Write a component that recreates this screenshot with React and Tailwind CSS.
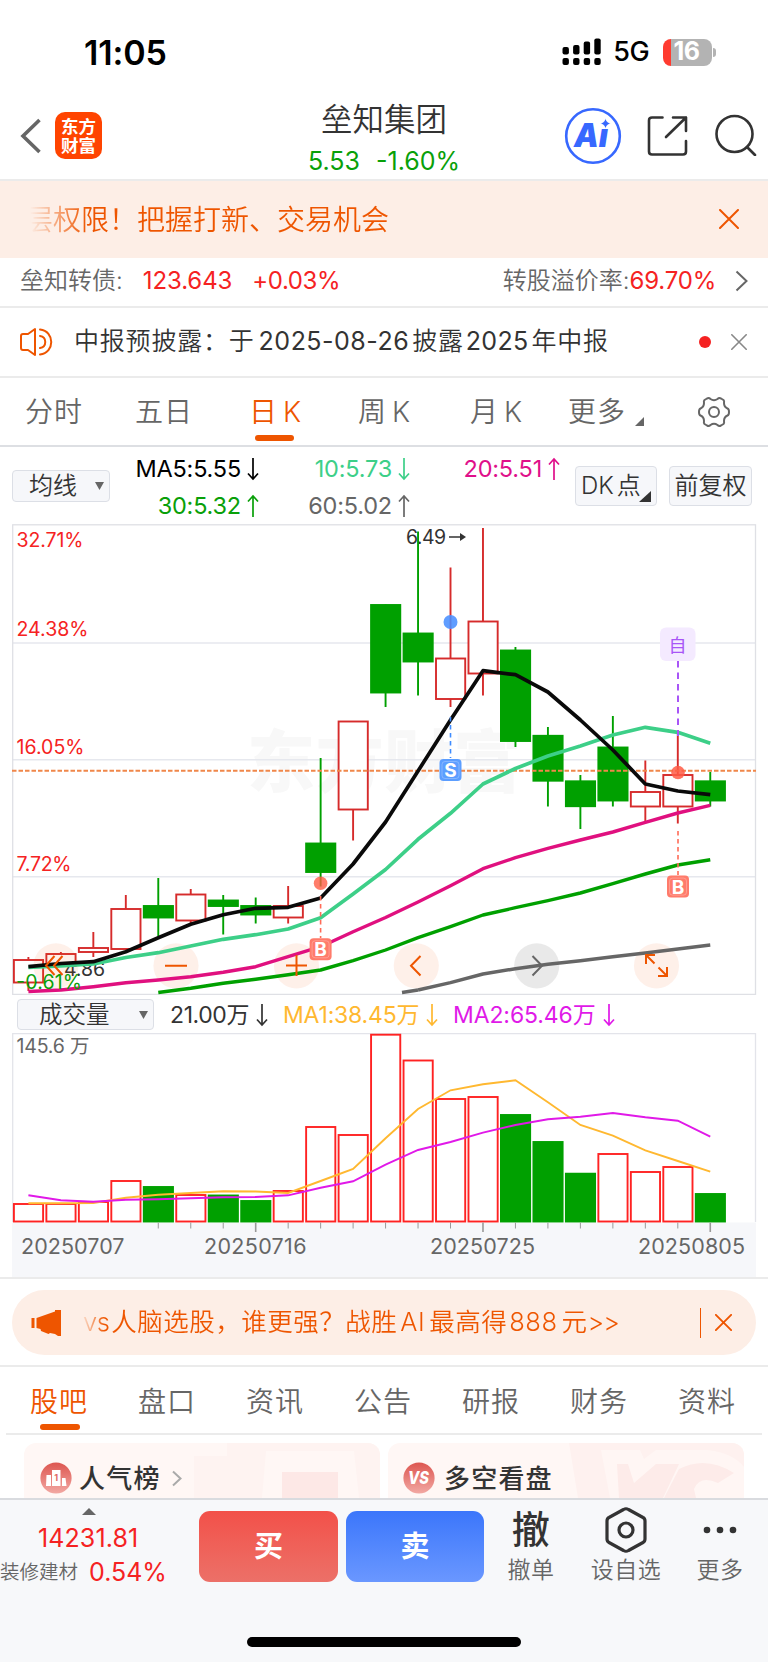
import React from 'react';

// one entry per trading day: [up, open/close top, open/close bottom, high, low, volume top]
const days = [
    [1, 960, 982.5, 957, 991, 1204],
    [1, 954, 966, 952, 966, 1204],
    [1, 948, 952, 932, 957, 1202],
    [1, 909, 949, 895, 949, 1181],
    [0, 906, 917.5, 878, 936, 1187],
    [1, 894.5, 920.5, 889, 924, 1195],
    [0, 900.5, 906, 895, 934.5, 1195.5],
    [0, 906, 914.5, 897.5, 923.5, 1201],
    [1, 906, 917.5, 886, 923.5, 1191],
    [0, 843.5, 872, 758, 886.5, 1127],
    [1, 721.5, 809.5, 721, 840.5, 1135],
    [0, 605, 692.5, 604.5, 707, 1034.7],
    [0, 633.5, 661.5, 531.5, 695.5, 1060.5],
    [1, 658.5, 699, 567.5, 707, 1099],
    [1, 621.5, 673.5, 528, 695.5, 1097],
    [0, 650.5, 741, 647, 747, 1115],
    [0, 735.8, 780.7, 727, 806.5, 1142],
    [0, 781.3, 806.2, 775, 829, 1173.7],
    [0, 747.5, 800.5, 716, 806.5, 1154],
    [1, 792, 806.5, 760.5, 821, 1172],
    [1, 775, 806.5, 733, 823.5, 1167],
    [0, 781.3, 800.5, 772, 806.5, 1194],
];
const volumeDown = [4, 6, 7, 15, 16, 17, 21];

const ma5 = [966.7, 963.5, 961.7, 951.7, 937.7, 924.3, 914.7, 908.3, 907.3, 898, 864, 822, 771, 720, 670.7, 674.7, 692, 720, 750, 784, 791, 794.7];
const ma10 = [967.5, 966, 964, 957.5, 952.7, 946, 939.3, 934.7, 929, 917.7, 894, 869.5, 839.3, 813.3, 784, 768.5, 756, 746, 735, 727.3, 732.3, 743.3];
const ma20 = [991.5, 990, 986.7, 982.7, 980, 976.7, 972.3, 966.7, 956.7, 946.7, 931.7, 917.5, 902, 885.7, 868.7, 857.7, 848.3, 840, 832, 822.3, 813, 805.3];
const ma30 = [992.5, 988.3, 983.3, 979.3, 974.7, 970, 960.7, 950, 937.7, 926.7, 915, 907.7, 900.7, 893, 883.7, 874, 865, 859.7];
const ma60 = [990, 982.7, 974, 968.7, 964.3, 960.7, 956.7, 953, 949, 945];
const vol1 = [1203.3, 1203.3, 1203, 1197.7, 1194.7, 1193, 1191.3, 1191.5, 1193, 1181, 1169, 1138.3, 1109, 1090.3, 1084.3, 1080.3, 1102.3, 1125, 1135.7, 1150.3, 1161, 1171.7];
const vol2 = [1195.3, 1200.3, 1201.7, 1199.7, 1199.3, 1198.3, 1197.3, 1197, 1195.3, 1187.7, 1181.3, 1164.7, 1150, 1142, 1132.7, 1125, 1119.3, 1116.7, 1113, 1117.3, 1120.7, 1136.7];

const xAt = (i) => 28.4 + i * 32.47;
const toPoints = (values, start = 0) => values.map((y, i) => `${xAt(i + start)},${y}`).join(' ');

const Cross = ({ size, className, width = 2 }) => (
    <svg width={size} height={size} viewBox="0 0 20 20" className={className} fill="none" stroke="currentColor" strokeWidth={width} strokeLinecap="round">
        <path d="M1 1L19 19M19 1L1 19" />
    </svg>
);

const Arrow = ({ up }) => (
    <svg width="12" height="24" viewBox="0 0 12 24" className="shrink-0" fill="none" stroke="currentColor" strokeWidth="1.7">
        {up ? <path d="M6 23V2M1 7.5L6 2L11 7.5" /> : <path d="M6 1V22M1 16.5L6 22L11 16.5" />}
    </svg>
);

const Badge = ({ x, y, color, children }) => (
    <g>
        <rect x={x - 11} y={y - 11} width="22" height="22" rx="4" fill={color} />
        <rect x={x - 8.5} y={y - 8.5} width="17" height="17" rx="3" fill="none" stroke="#fff" strokeOpacity=".25" />
        <text x={x} y={y + 7} textAnchor="middle" fontSize="19" fontWeight="700" fill="#fff">{children}</text>
    </g>
);

function StatusBar() {
    return (
        <div className="h-[95px] pt-[9px] pl-[84px] pr-[52px] flex items-center justify-between text-black">
            <span className="text-[34px] font-semibold tracking-[-0.1px]">11:05</span>
            <div className="flex items-center">
                <svg width="39" height="28" viewBox="0 0 39 28">
                    {[9, 7, 3.5, 0.5].map((y, i) => (
                        <g key={i}>
                            <rect x={0.5 + i * 10.6} y={y} width="6.4" height={16.5 - y} rx="2" />
                            <rect x={0.5 + i * 10.6} y="20" width="6.4" height="7" rx="2" />
                        </g>
                    ))}
                </svg>
                <span className="ml-[12px] text-[27px] font-medium tracking-[-0.6px]">5G</span>
                <div className="ml-[14px] w-[49px] h-[27px] rounded-[8px] bg-[linear-gradient(90deg,#ff3b30_8px,#b3b3b3_8px)] text-white text-[25px] font-bold flex items-center justify-center">
                    <span className="-ml-[2px] tracking-[-0.5px]">16</span>
                </div>
                <div className="ml-[1px] w-[3px] h-[9px] rounded-r-full bg-[#b3b3b3]" />
            </div>
        </div>
    );
}

function NavBar() {
    return (
        <div className="h-[86px] border-b-2 border-[#ebebeb] flex justify-between pl-[20px] pr-[11px]">
            <div className="flex w-[271px] pt-[17px]">
                <svg width="22" height="36" viewBox="0 0 22 36" className="mt-[6px]" fill="none" stroke="#666" strokeWidth="3.6">
                    <path d="M19.5 2L3 18L19.5 34" />
                </svg>
                <div className="ml-[13px] size-[47px] rounded-[10px] bg-[#ff4400] text-white text-[17.5px] leading-[19px] font-bold flex flex-col items-center justify-center">
                    <span>东方</span>
                    <span>财富</span>
                </div>
            </div>
            <div className="flex flex-col items-center whitespace-nowrap">
                <span className="text-[31.500px] leading-[50px] text-[#333] font-[350]">垒知集团</span>
                <span className="text-[25px] leading-[32px] text-[#09a009]">5.53<span className="ml-[16px]">-1.60%</span></span>
            </div>
            <div className="flex w-[280px] justify-end pt-[12px]">
                <svg width="58" height="58" viewBox="0 0 58 58" fill="#3768ff">
                    <circle cx="29" cy="29" r="26.8" fill="none" stroke="#3768ff" strokeWidth="2.6" />
                    <text x="10" y="39.5" fontSize="32.500" fontWeight="900" fontStyle="italic" textLength="34" lengthAdjust="spacingAndGlyphs">Aı</text>
                    <path d="M41.500 11.500Q42.500 15.500 46.500 16.500Q42.500 17.500 41.500 21.500Q40.500 17.500 36.500 16.500Q40.500 15.500 41.500 11.500Z" stroke="#fff" strokeWidth=".6" />
                </svg>
                <svg width="42" height="42" viewBox="0 0 42 42" className="ml-[25px] mt-[8px]" fill="none" stroke="#333" strokeWidth="2.6" strokeLinecap="round" strokeLinejoin="round">
                    <path d="M15.500 2.500H5Q2 2.500 2 5.500V36.500Q2 39.500 5 39.500H36Q39 39.500 39 36.500V26M26 2.500H39V16M39 2.500L19 22" />
                </svg>
                <svg width="43" height="42" viewBox="0 0 43 42" className="ml-[25px] mt-[7px]" fill="none" stroke="#333" strokeWidth="2.6" strokeLinecap="round">
                    <circle cx="20.500" cy="20" r="18" />
                    <path d="M33 33L41 41" />
                </svg>
            </div>
        </div>
    );
}

function Notices() {
    return (
        <>
            <div className="h-[77px] bg-[#fdeee6] text-[#ee5500] flex items-center justify-between pl-[25px] pr-[29px]">
                <span className="text-[28px] font-[350] bg-[linear-gradient(90deg,#ee550000_5px,#ee5500_62px)] bg-clip-text text-transparent">层权限！把握打新、交易机会</span>
                <Cross size={20} className="-mt-[2px]" />
            </div>
            <div className="h-[50px] border-b-2 border-[#ebebeb] pb-[3px] pl-[20px] pr-[20px] flex items-center text-[24px] text-[#666] whitespace-nowrap">
                <span className="font-[350]">垒知转债:</span>
                <span className="ml-[20px] text-[#f52222] tracking-[-0.1px]">123.643</span>
                <span className="ml-[20px] text-[#f52222] tracking-[-0.4px]">+0.03%</span>
                <span className="ml-auto font-[350]">转股溢价率:</span>
                <span className="text-[#f52222] tracking-[-0.2px]">69.70%</span>
                <svg width="13" height="22" viewBox="0 0 13 22" className="ml-[19px]" fill="none" stroke="#666" strokeWidth="2">
                    <path d="M1.500 1.500L11.500 11L1.500 20.500" />
                </svg>
            </div>
            <div className="h-[70px] border-b-2 border-[#ebebeb] pl-[19px] pr-[21px] flex items-center">
                <svg width="34" height="30" viewBox="0 0 34 30" fill="none" stroke="#ee5500" strokeWidth="2" strokeLinecap="round" strokeLinejoin="round">
                    <path d="M16 2V28L9 23H4Q2 23 2 21V9Q2 7 4 7H9ZM21 2.500C36 4 36 26 21 27.500M21 9C28 10 28 20 21 21" />
                </svg>
                <span className="ml-[21px] text-[25px] tracking-[0.8px] text-[#333] font-[350] whitespace-nowrap">中报预披露：于<span className="ml-[4px] mr-[3px] tracking-[0.5px] font-normal">2025-08-26</span>披露<span className="ml-[2px] mr-[3px] tracking-[0.3px] font-normal">2025</span>年中报</span>
                <div className="ml-auto size-[12px] rounded-full bg-[#f52222]" />
                <Cross size={16} className="ml-[20px] text-[#888]" />
            </div>
        </>
    );
}

function PeriodTabs() {
    return (
        <div className="h-[69px] border-b-2 border-[#dddfe3] flex items-center pl-[25px] text-[28px] text-[#666] font-[350] whitespace-nowrap tracking-[1px]">
            <span className="w-[110px]">分时</span>
            <span className="w-[114px]">五日</span>
            <div className="w-[109px] h-full flex items-center relative text-[#ee5500]">
                日<span className="ml-[5px]">K</span>
                <div className="absolute left-[6px] bottom-[4px] w-[39px] h-[6px] rounded-full bg-[#ee5500]" />
            </div>
            <span className="w-[112px]">周<span className="ml-[5px]">K</span></span>
            <span className="w-[98px]">月<span className="ml-[5px]">K</span></span>
            <span>更多</span>
            <svg width="9" height="9" viewBox="0 0 9 9" className="ml-[9px] mt-[20px]"><path d="M9 0V9H0Z" fill="#666" /></svg>
            <svg width="34" height="32" viewBox="-17 -16 34 32" className="ml-[53px]" fill="none" stroke="#666" strokeWidth="2" strokeLinejoin="round">
                <path d="M-7 -13.500Q-5 -14.500 -3.500 -13Q0 -10.500 3.500 -13Q5 -14.500 7 -13.500L9.500 -12Q10.500 -11 10 -9Q10 -5 13.500 -3.500Q15 -3 15 0Q15 3 13.500 3.500Q10 5 10 9Q10.500 11 9.500 12L7 13.500Q5 14.500 3.500 13Q0 10.500 -3.500 13Q-5 14.500 -7 13.500L-9.500 12Q-10.500 11 -10 9Q-10 5 -13.500 3.500Q-15 3 -15 0Q-15 -3 -13.500 -3.500Q-10 -5 -10 -9Q-10.500 -11 -9.500 -12Z" />
                <circle r="5" />
            </svg>
        </div>
    );
}

const averages = [
    { label: 'MA5:5.55', color: 'text-black', up: false },
    { label: '10:5.73', color: 'text-[#3dcf88]', up: false },
    { label: '20:5.51', color: 'text-[#e0108a]', up: true },
    { label: '30:5.32', color: 'text-[#09a009]', up: true },
    { label: '60:5.02', color: 'text-[#666]', up: true },
];

function AverageBar() {
    return (
        <div className="h-[77px] flex items-start pl-[12px] text-[24px] text-[#333]">
            <div className="mt-[23px] w-[98px] h-[32px] rounded-[4px] border border-[#dcdfe6] bg-[#f6f7fa] flex items-center justify-between pl-[16px] pr-[5px] font-[350]">
                均线
                <svg width="9" height="8" viewBox="0 0 9 8"><path d="M0 0H9L4.500 8Z" fill="#666" /></svg>
            </div>
            <div className="grid grid-cols-[149px_151px_150px] pt-[3px]">
                {averages.map((item) => (
                    <div key={item.label} className={`h-[37px] flex items-center justify-end gap-[6px] text-[23.500px] tracking-[-0.2px] ${item.color}`}>
                        {item.label}
                        <Arrow up={item.up} />
                    </div>
                ))}
            </div>
            <div className="relative mt-[19px] ml-[15px] w-[82px] h-[40px] rounded-[4px] border border-[#dcdfe6] bg-[#f6f7fa] pl-[5px] leading-[38px] font-[350]">
                DK<span className="ml-[3px]">点</span>
                <svg width="12" height="11" viewBox="0 0 12 11" className="absolute right-[5px] bottom-[3px]"><path d="M12 0V11H0Z" fill="#333" /></svg>
            </div>
            <div className="mt-[19px] ml-[12px] w-[83px] h-[40px] rounded-[4px] border border-[#dcdfe6] bg-[#f6f7fa] text-center leading-[38px] font-[350]">前复权</div>
        </div>
    );
}

function PriceChart() {
    return (
        <svg width="745" height="471" viewBox="12 524 745 471" className="ml-[12px] block" fontSize="19.500">
            <text x="247" y="787" fontSize="68" fontWeight="900" fill="#f8f8f8" textLength="274">东方财富</text>
            <g stroke="#e6e8ee" strokeWidth="1.6">
                <path d="M12 643H756M12 759.700H756M12 876.700H756" />
                <rect x="12.700" y="524.800" width="742.800" height="469.600" fill="none" stroke="#dfe0e5" strokeWidth="1.300" />
            </g>
            <g fill="#f52222">
                <text x="16.500" y="546.500" textLength="67">32.71%</text>
                <text x="16.500" y="636" textLength="72">24.38%</text>
                <text x="16.500" y="753.500" textLength="68">16.05%</text>
                <text x="16.500" y="870.500" textLength="55">7.72%</text>
            </g>
            <g fill="#333">
                <text x="406" y="544" textLength="40">6.49</text>
                <path d="M449 536.200H460V533L466 537L460 541V537.800H449Z" />
                <text x="64" y="976" textLength="41">4.86</text>
            </g>

            {days.map(([up, top, bottom, high, low], i) => {
                const x = xAt(i);
                const color = up ? '#d62b2b' : '#00a000';
                return (
                    <g key={i} stroke={color} strokeWidth="1.900">
                        <path d={`M${x} ${high}V${top}M${x} ${bottom}V${low}`} />
                        <rect x={x - 14.500} y={top} width="29.200" height={bottom - top} fill={up ? '#fff' : color} />
                    </g>
                );
            })}
            <path d="M12 770.700H756" stroke="#f0874a" strokeWidth="2" strokeDasharray="4.500 2" />

            {/* floating chart controls */}
            <g fill="#ee5500" fillOpacity=".085">
                {[56, 176, 296.5, 416.3, 656.5].map((x) => <circle key={x} cx={x} cy="965.800" r="22.600" />)}
                <circle cx="536.700" cy="965.800" r="22.600" fill="#000" />
            </g>

            <g fill="none" strokeWidth="3.400" strokeLinejoin="round">
                <path d="M402 992.500L418 990" stroke="#666" />
                <polyline points={toPoints(ma60, 12)} stroke="#666" />
                <polyline points={toPoints(ma30, 4)} stroke="#00a000" />
                <polyline points={toPoints(ma20)} stroke="#e0107f" />
                <polyline points={toPoints(ma10)} stroke="#3dcf88" strokeWidth="3.700" />
                <polyline points={toPoints(ma5)} stroke="#0a0a0a" strokeWidth="3.700" />
            </g>

            {/* trade markers */}
            <g fill="none" strokeWidth="1.600" strokeDasharray="4.500 3.500">
                <path d="M320.600 896V938M678 831V875" stroke="#ff6b57" />
                <path d="M450.500 717V758" stroke="#3f8cff" />
                <path d="M678 661V736" stroke="#a855f7" strokeDasharray="6.500 5" strokeWidth="2" />
            </g>
            <circle cx="320.600" cy="883.300" r="6.800" fill="#ff5c45" fillOpacity=".8" />
            <circle cx="678" cy="772.500" r="6.800" fill="#ff5c45" fillOpacity=".85" />
            <circle cx="450.500" cy="622" r="7" fill="#4a90ff" fillOpacity=".88" />
            <Badge x={320.6} y={949.3} color="#ff7b6b">B</Badge>
            <Badge x={678} y={886.6} color="#ff7b6b">B</Badge>
            <Badge x={450.5} y={770} color="#5c9eff">S</Badge>
            <rect x="660" y="627.500" width="35.500" height="33.500" rx="6" fill="#f4eaff" />
            <text x="677.500" y="651.500" fontSize="18" fill="#a855f7" textAnchor="middle">自</text>

            <text x="16" y="988.500" fill="#09a009" textLength="66">-0.61%</text>
            <g fill="none" stroke="#ee5500" strokeWidth="2">
                <path d="M54.500 956L46 965.500L54.500 975M62.500 956L54 965.500L62.500 975" />
                <path d="M165 965.800H187M286 965.500H307M296.500 955V976M420.500 956L411 965.800L420.500 975.500" />
                <path d="M646 964V955H655M646 955L654.500 963.500M667 967V976H658M667 976L658.500 967.500" />
                <path d="M532.500 956L542 965.800L532.500 975.500" stroke="#666" />
            </g>
        </svg>
    );
}

function VolumeBar() {
    return (
        <div className="h-[38px] pt-[4px] pl-[17px] flex items-start text-[23px] leading-[32px] whitespace-nowrap text-[#333]">
            <div className="w-[137px] h-[31px] rounded-[4px] border border-[#dcdfe6] bg-[#f6f7fa] flex items-center justify-between pl-[21px] pr-[5px] text-[23.500px] font-[350]">
                成交量
                <svg width="9" height="8" viewBox="0 0 9 8"><path d="M0 0H9L4.500 8Z" fill="#666" /></svg>
            </div>
            <div className="ml-[16px] w-[113px] flex items-center gap-[7px] tracking-[-0.4px]">21.00万<Arrow /></div>
            <div className="w-[170px] flex items-center gap-[7px] tracking-[-0.2px] text-[#ffb830]">MA1:38.45万<Arrow /></div>
            <div className="flex items-center gap-[7px] tracking-[-0.1px] text-[#e019e8]">MA2:65.46万<Arrow /></div>
        </div>
    );
}

function VolumeChart() {
    return (
        <svg width="745" height="244" viewBox="12 1033 745 244" className="ml-[12px] block">
            <rect x="12" y="1222.500" width="744" height="56" fill="#f6f7fa" />
            <path d="M12.700 1222V1033.600H755.500V1222" fill="none" stroke="#e3e4ea" strokeWidth="1.300" />
            <text x="16.500" y="1053" fontSize="19.500" fill="#666" textLength="73">145.6 万</text>
            {days.map((day, i) => {
                const down = volumeDown.includes(i);
                const color = down ? '#00a000' : '#ff2222';
                return (
                    <rect key={i} x={xAt(i) - 14.500} y={day[5]} width="29.200" height={1221.5 - day[5]} fill={down ? color : '#fff'} stroke={color} strokeWidth="1.900" />
                );
            })}
            {days.map((_, i) => i > 3 && (
                <path key={i} d={`M${xAt(i)} 1222.500V${i % 7 === 0 ? 1232 : 1228.5}`} stroke="#999" strokeWidth={i % 7 === 0 ? 1.6 : 1} />
            ))}
            <g fill="none" strokeWidth="1.900">
                <polyline points={toPoints(vol1)} stroke="#ffb830" />
                <polyline points={toPoints(vol2)} stroke="#e019e8" />
            </g>
            <g fill="#666" fontSize="21.500">
                <text x="21" y="1253.500" textLength="103.500">20250707</text>
                <text x="204" y="1253.500" textLength="102.500">20250716</text>
                <text x="430" y="1253.500" textLength="105">20250725</text>
                <text x="638" y="1253.500" textLength="107">20250805</text>
            </g>
        </svg>
    );
}

function Promo() {
    return (
        <div className="h-[90px] border-y-2 border-[#ebebeb] pt-[11px] px-[12px]">
            <div className="h-[65px] rounded-full bg-[#fdeee6] text-[#ee5500] flex items-center pl-[19px] pr-[24px]">
                <svg width="31" height="28" viewBox="0 0 31 28" fill="#ee5500">
                    <path d="M0.500 9H3.500V19H0.500ZM5.500 9L24 2.500V1H30V27H27L24 25L19 24L17.500 25L10 22L9.500 20L5.500 19Z" />
                </svg>
                <span className="ml-[21px] text-[25.500px] tracking-[0.5px] font-[350] whitespace-nowrap bg-[linear-gradient(90deg,#ee550033_2px,#ee5500_22px)] bg-clip-text text-transparent"><span className="tracking-[-0.5px]">vs</span><span className="ml-[2px]">人脑选股，谁更强？战胜</span><span className="ml-[3px] mr-[4px]">AI</span>最高得<span className="ml-[2px] mr-[4px]">888</span>元<span className="tracking-[-1px]">&gt;&gt;</span></span>
                <div className="ml-auto w-[1.500px] h-[30px] bg-[#ee5500]" />
                <Cross size={17} className="ml-[14px]" width={2.2} />
            </div>
        </div>
    );
}

function SectionTabs() {
    const tabs = ['股吧', '盘口', '资讯', '公告', '研报', '财务', '资料'];
    return (
        <div className="mx-[6px] h-[68px] border-b-2 border-[#ebebeb] flex items-center text-[28px] tracking-[1px] text-[#666] font-[350]">
            {tabs.map((tab, i) => (
                <div key={tab} className={`relative w-[108px] pl-[24px] h-full leading-[70px] ${i === 0 ? 'text-[#ee5500]' : ''}`}>
                    {tab}
                    {i === 0 && <div className="absolute left-[34px] bottom-[3px] w-[40px] h-[6px] rounded-full bg-[#ee5500]" />}
                </div>
            ))}
        </div>
    );
}

function Cards() {
    return (
        <div className="h-[63px] pt-[8px] px-[24px] flex gap-[8px] text-[26px] font-medium text-[#333]">
            <div className="relative w-[356px] h-[55px] rounded-t-[12px] overflow-hidden bg-[#fff7f5]">
                <svg width="356" height="55" className="absolute inset-0">
                    <path d="M170 13H203V0H356V55H170Z" fill="#fef3f1" />
                    <path d="M242 8H330L335 55H238Z" fill="#fff7f5" />
                    <rect x="258" y="29" width="56" height="26" fill="#fde8e6" />
                </svg>
                <div className="relative flex items-center h-[50px] mt-[11px] pl-[16px] -translate-y-[1px]">
                    <svg width="32" height="32" viewBox="0 0 32 32" className="-mt-[1px]">
                        <defs>
                            <linearGradient id="disc" x2="0" y2="1">
                                <stop stopColor="#dd5650" />
                                <stop offset="1" stopColor="#f2a8a3" />
                            </linearGradient>
                        </defs>
                        <circle cx="16" cy="16" r="15.600" fill="url(#disc)" />
                        <path d="M6.500 13H11V24H6ZM12 8H20.500V24H12ZM22 16H25.500L26.500 24H22Z" fill="#fff" />
                        <text x="16.200" y="19" fontSize="9" fontWeight="700" fill="#e06b66" textAnchor="middle">1</text>
                    </svg>
                    <span className="ml-[7px] tracking-[1.200px]">人气榜</span>
                    <svg width="10" height="17" viewBox="0 0 10 17" className="ml-[11px]" fill="none" stroke="#aaa" strokeWidth="2"><path d="M1 1.500L8.500 8.500L1 15.500" /></svg>
                </div>
            </div>
            <div className="relative w-[356px] h-[55px] rounded-t-[12px] overflow-hidden bg-[#fff7f5]">
                <svg width="356" height="55" className="absolute inset-0">
                    <path d="M181 0H356V55H190Z" fill="#fef1ef" />
                    <path d="M213 7H252L256 16L268 7H320Q345 10 356 24V55H222Z" fill="#fff6f4" />
                    <path d="M229 21H240L246 40L268 21H291L275 55H231ZM291 26Q318 12 346 30L330 40Q312 32 306 46L308 55H276Z" fill="#fdebe9" />
                </svg>
                <div className="relative flex items-center h-[50px] mt-[11px] pl-[15px] -translate-y-[1px]">
                    <svg width="32" height="32" viewBox="0 0 32 32" className="-mt-[1px]">
                        <circle cx="16" cy="16" r="15.600" fill="url(#disc)" />
                        <text x="5" y="22" fontSize="18" fontWeight="800" fontStyle="italic" fill="#fff" textLength="21" lengthAdjust="spacingAndGlyphs">VS</text>
                    </svg>
                    <span className="ml-[9px] tracking-[1.200px]">多空看盘</span>
                </div>
            </div>
        </div>
    );
}

function BottomBar() {
    return (
        <div className="h-[164px] border-t-2 border-[#d9dbdf] bg-[#f7f8fa] text-[#666]">
            <div className="h-[137px] flex">
                <div className="w-[199px] flex flex-col items-start whitespace-nowrap text-[#f52222] text-[25px]">
                    <svg width="14" height="7" viewBox="0 0 14 7" className="ml-[82px] mt-[8px]"><path d="M0 7L7 0L14 7Z" fill="#666" /></svg>
                    <span className="ml-[38px] mt-[6px] leading-[34px] tracking-[0.1px]">14231.81</span>
                    <div className="leading-[34px] flex items-center">
                        <span className="text-[19.500px] text-[#666] font-[350]">装修建材</span>
                        <span className="ml-[11px]">0.54%</span>
                    </div>
                </div>
                <div className="mt-[11px] w-[139px] h-[71px] rounded-[11px] bg-linear-to-b from-[#f25049] to-[#ec7068] text-white text-[29px] font-bold flex items-center justify-center">买</div>
                <div className="mt-[11px] ml-[8px] w-[138px] h-[71px] rounded-[11px] bg-linear-to-b from-[#3b76fb] to-[#6a97ff] text-white text-[29px] font-bold flex items-center justify-center">卖</div>
                <div className="ml-[7px] w-[80px] flex flex-col items-center text-[23px] font-[350] tracking-[0.5px]">
                    <span className="h-[52px] leading-[58px] text-[38px] text-[#333] font-medium">撤</span>
                    <span className="leading-[36px]">撤单</span>
                </div>
                <div className="ml-[4px] w-[102px] flex flex-col items-center text-[23px] font-[350] tracking-[0.5px]">
                    <svg width="44" height="48" viewBox="-22 -24 44 48" className="mt-[6px] mb-[-2px] shrink-0" fill="none" stroke="#333" strokeWidth="3.200">
                        <path d="M-2.500 -20.500Q0 -22 2.500 -20.500L17 -12.500Q19 -11.500 19 -9V9Q19 11.500 17 12.500L2.500 20.500Q0 22 -2.500 20.500L-17 12.500Q-19 11.500 -19 9V-9Q-19 -11.500 -17 -12.500Z" />
                        <circle r="7" />
                    </svg>
                    <span className="leading-[36px]">设自选</span>
                </div>
                <div className="ml-[2px] w-[82px] flex flex-col items-center text-[23px] font-[350] tracking-[0.5px]">
                    <svg width="34" height="8" viewBox="0 0 34 8" className="mt-[26px] mb-[18px] shrink-0" fill="#333">
                        <circle cx="4" cy="4" r="3.300" />
                        <circle cx="17" cy="4" r="3.300" />
                        <circle cx="30" cy="4" r="3.300" />
                    </svg>
                    <span className="leading-[36px]">更多</span>
                </div>
            </div>
            <div className="mx-auto w-[274px] h-[10px] rounded-full bg-black" />
        </div>
    );
}

export default function App() {
    return (
        <div className="w-[768px] h-[1663px] overflow-hidden bg-white font-['Inter','Noto_Sans_CJK_SC',sans-serif]">
            <StatusBar />
            <NavBar />
            <Notices />
            <PeriodTabs />
            <AverageBar />
            <PriceChart />
            <VolumeBar />
            <VolumeChart />
            <Promo />
            <SectionTabs />
            <Cards />
            <BottomBar />
        </div>
    );
}
